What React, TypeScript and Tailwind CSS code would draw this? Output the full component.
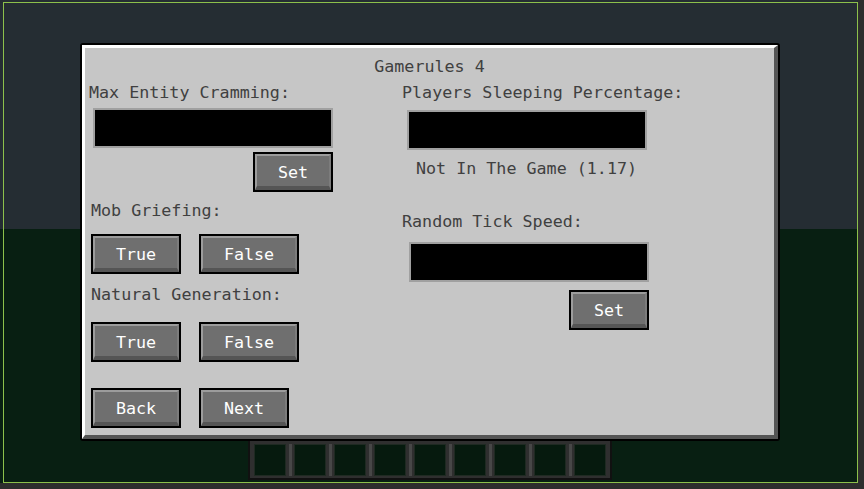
import React from "react";

const font = "font-['DejaVu_Sans_Mono',monospace] text-[16.7px] leading-[20px]";

const Button = ({ label, width }: { label: string; width: string }) => (
  <div className={`h-[40px] ${width} border-2 border-black`}>
    <div className="flex h-full items-center justify-center border-t-2 border-l-2 border-r-2 border-b-[4px] border-t-[#9c9c9c] border-l-[#9c9c9c] border-r-[#7c7c7c] border-b-[#555555] bg-[#6f6f6f] pt-[2px] text-white">
      {label}
    </div>
  </div>
);

const Field = ({ className }: { className: string }) => (
  <div className={`h-[40px] w-[240px] border-2 border-[#a0a0a0] bg-black ${className}`} />
);

const Hotbar = () => (
  <div className="absolute left-[248px] top-[436px] flex h-[44px] w-[364px] border-2 border-[#111111] bg-[#2f2f2f] px-[4px] pt-[6px] pb-[2px]">
    {Array.from({ length: 9 }).map((_, i) => (
      <React.Fragment key={i}>
        {i > 0 && (
          <div className="flex w-[8px] justify-center">
            <div className="h-full w-[3px] bg-[#474747]" />
          </div>
        )}
        <div className="h-[32px] w-[32px] border border-[#1f2a22] bg-[#061a0e]" />
      </React.Fragment>
    ))}
  </div>
);

export default function App() {
  return (
    <div className={`relative h-[489px] w-[864px] overflow-hidden bg-[#2d2d2d] ${font}`}>
      <div className="flex h-[483px] w-[858px] flex-col">
        <div className="h-[229px] bg-[#252d33]" />
        <div className="flex-1 bg-[#081f12]" />
      </div>
      <div className="absolute left-[3px] top-[2px] h-[481px] w-[855px] border border-[#8cc04b]" />

      <Hotbar />

      <div className="absolute left-[80px] top-[43px] h-[398px] w-[700px] rounded-[3px] bg-black p-[2px]">
        <div className="flex h-full flex-col border-t-[3px] border-l-[3px] border-r-[4px] border-b-[4px] border-t-white border-l-white border-r-[#555555] border-b-[#555555] bg-[#c6c6c6] text-[#404040]">
          <div className="mt-[8px] text-center">Gamerules 4</div>
          <div className="mt-[6px] flex">
            <div className="flex w-[314px] flex-col">
              <div className="ml-[4px]">Max Entity Cramming:</div>
              <Field className="mt-[6px] ml-[8px]" />
              <div className="mt-[4px] ml-[168px]">
                <Button label="Set" width="w-[80px]" />
              </div>
              <div className="mt-[8px] ml-[6px]">Mob Griefing:</div>
              <div className="mt-[14px] ml-[6px] flex gap-[18px]">
                <Button label="True" width="w-[90px]" />
                <Button label="False" width="w-[100px]" />
              </div>
              <div className="mt-[10px] ml-[6px]">Natural Generation:</div>
              <div className="mt-[18px] ml-[6px] flex gap-[18px]">
                <Button label="True" width="w-[90px]" />
                <Button label="False" width="w-[100px]" />
              </div>
              <div className="mt-[26px] ml-[6px] flex gap-[18px]">
                <Button label="Back" width="w-[90px]" />
                <Button label="Next" width="w-[90px]" />
              </div>
            </div>
            <div className="flex flex-1 flex-col">
              <div className="ml-[3px]">Players Sleeping Percentage:</div>
              <Field className="mt-[8px] ml-[8px]" />
              <div className="mt-[8px] ml-[17px]">Not In The Game (1.17)</div>
              <div className="mt-[33px] ml-[3px]">Random Tick Speed:</div>
              <Field className="mt-[11px] ml-[10px]" />
              <div className="mt-[8px] ml-[170px]">
                <Button label="Set" width="w-[80px]" />
              </div>
            </div>
          </div>
        </div>
      </div>
    </div>
  );
}
